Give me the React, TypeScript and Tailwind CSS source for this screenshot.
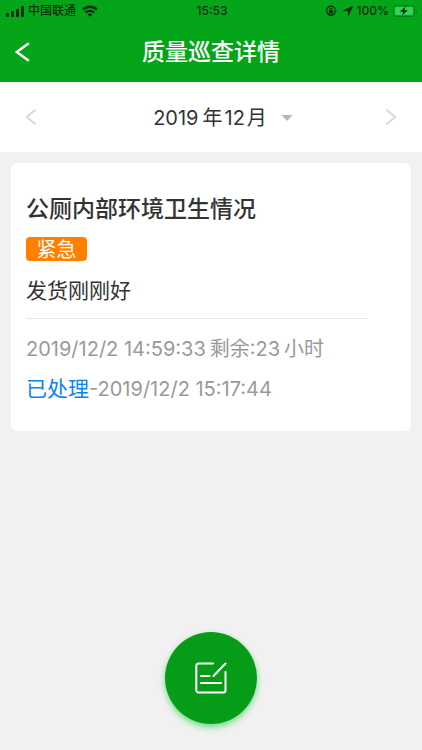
import React from 'react';

interface Inspection {
  title: string;
  level: string;
  description: string;
  createdAt: string;
  hoursLeft: number;
  status: string;
  handledAt: string;
}

const inspection: Inspection = {
  title: '公厕内部环境卫生情况',
  level: '紧急',
  description: '发货刚刚好',
  createdAt: '2019/12/2 14:59:33',
  hoursLeft: 23,
  status: '已处理',
  handledAt: '2019/12/2 15:17:44',
};

function StatusBar() {
  return (
    <div className="grid h-[22px] grid-cols-[1fr_auto_1fr] items-center pl-1.5 pr-1 text-xs font-medium text-[#06300b]">
      <div className="flex items-center gap-1">
        <svg width="18" height="11" viewBox="0 0 18 11" fill="currentColor" aria-hidden="true">
          <rect x="0" y="7" width="3" height="4" rx="0.8" />
          <rect x="5" y="5" width="3" height="6" rx="0.8" />
          <rect x="10" y="3" width="3" height="8" rx="0.8" />
          <rect x="15" y="0" width="3" height="11" rx="0.8" />
        </svg>
        <span>中国联通</span>
        <svg className="ml-0.5" width="16" height="12" viewBox="0 0 16 12" fill="none" stroke="currentColor" strokeWidth="2.4" aria-hidden="true">
          <path d="M1 4.6a10 10 0 0 1 14 0" />
          <path d="M3.7 7.6a6.2 6.2 0 0 1 8.6 0" />
          <path d="M8 11.8L5.6 9.4a3.5 3.5 0 0 1 4.8 0z" fill="currentColor" stroke="none" />
        </svg>
      </div>
      <span>15:53</span>
      <div className="flex items-center justify-end gap-1">
        <svg className="mr-0.5" width="12" height="12" viewBox="0 0 12 12" fill="none" stroke="currentColor" aria-hidden="true">
          <path d="M10.3 7.3A4.5 4.5 0 1 1 10.3 4.2" strokeWidth="1.3" />
          <path d="M8.9 5.2h3L10.4 7.4z" fill="currentColor" stroke="none" />
          <rect x="3.9" y="5.2" width="4.2" height="3.2" rx="0.4" fill="currentColor" stroke="none" />
          <path d="M4.8 5.4V4.5a1.2 1.2 0 0 1 2.4 0v0.9" strokeWidth="0.9" />
        </svg>
        <svg width="10" height="10" viewBox="0 0 10 10" fill="currentColor" stroke="currentColor" strokeWidth="0.8" strokeLinejoin="round" aria-hidden="true">
          <path d="M9.5 0.5L5.4 9.5V4.9L0.5 4.6z" />
        </svg>
        <span>100%</span>
        <svg width="25" height="12" viewBox="0 0 25 12" aria-hidden="true">
          <rect x="0.5" y="0.5" width="21" height="11" rx="2.6" fill="none" stroke="#067a14" />
          <rect x="2" y="2" width="18" height="8" rx="1.4" fill="#33d158" />
          <path d="M23 4v4c1.3-0.6 1.3-3.4 0-4z" fill="#067a14" />
          <path d="M12.6 1.4L6.8 6.8h3.4L9 10.6l5.9-5.4h-3.5z" fill="#06300b" />
        </svg>
      </div>
    </div>
  );
}

function Header() {
  return (
    <header className="bg-[#05a51a]">
      <StatusBar />
      <div className="grid h-[60px] grid-cols-[44px_1fr_44px] items-center text-white">
        <button type="button" aria-label="返回" className="flex h-11 items-center pl-[15px]">
          <svg width="15" height="20" viewBox="0 0 15 20" fill="none" stroke="currentColor" strokeWidth="2.4" aria-hidden="true">
            <path d="M13.8 1.2L1.8 10l12 8.8" />
          </svg>
        </button>
        <h1 className="text-center text-[23px] leading-8 font-medium">质量巡查详情</h1>
      </div>
    </header>
  );
}

function MonthPicker() {
  return (
    <nav className="flex h-[70px] items-center justify-between bg-white px-[25px]">
      <button type="button" aria-label="上个月" className="flex h-11 items-center text-[#d6d6d6]">
        <svg width="12" height="16" viewBox="0 0 12 16" fill="none" stroke="currentColor" strokeWidth="1.8" aria-hidden="true">
          <path d="M10.5 0.8L1.8 8l8.7 7.2" />
        </svg>
      </button>
      <button type="button" className="flex items-center pt-0.5 pl-6 text-xl text-[#333]">
        <span className="mr-1">2019</span>
        <span className="mr-0.5">年</span>
        <span className="mr-0.5">12</span>
        <span>月</span>
        <svg className="ml-3.5" width="12" height="6" viewBox="0 0 12 6" fill="#b8b8b8" aria-hidden="true">
          <path d="M0.5 0h11L6 6z" />
        </svg>
      </button>
      <button type="button" aria-label="下个月" className="flex h-11 items-center text-[#d6d6d6]">
        <svg width="12" height="16" viewBox="0 0 12 16" fill="none" stroke="currentColor" strokeWidth="1.8" aria-hidden="true">
          <path d="M1.5 0.8L10.2 8l-8.7 7.2" />
        </svg>
      </button>
    </nav>
  );
}

function InspectionCard({ item }: { item: Inspection }) {
  return (
    <article className="m-[11px] rounded-md bg-white px-[15px] pt-[30px] pb-[22px]">
      <h2 className="text-[23px] leading-8 font-medium text-[#333]">{item.title}</h2>
      <span className="mt-3 flex h-6 w-[61px] items-center justify-center rounded bg-[#ff8000] pt-0.5 text-xl text-white">
        {item.level}
      </span>
      <p className="mt-3.5 text-[21px] leading-8 text-[#333]">{item.description}</p>
      <div className="mt-[11px] mr-[29px] border-t border-[#e8e8e8] pt-2.5 text-[#999]">
        <p className="flex items-center text-xl leading-10 whitespace-nowrap">
          <span className="mr-1">{item.createdAt}</span>
          <span className="mr-1">剩余:{item.hoursLeft}</span>
          <span>小时</span>
        </p>
        <p className="text-xl leading-10 whitespace-nowrap">
          <span className="text-[21px] text-[#0a84f0]">{item.status}</span>-{item.handledAt}
        </p>
      </div>
    </article>
  );
}

export default function App() {
  return (
    <div className="flex min-h-screen flex-col bg-[#f1f1f1] font-['Inter','Noto_Sans_CJK_SC',sans-serif]">
      <Header />
      <MonthPicker />
      <main>
        <InspectionCard item={inspection} />
      </main>
      <footer className="mt-auto flex justify-center pb-[26px]">
        <button
          type="button"
          aria-label="填写处理"
          className="flex size-[92px] items-center justify-center rounded-full bg-[#069c18] text-white shadow-[0_3px_6px_rgba(5,200,50,0.55)]"
        >
          <svg
            width="32"
            height="32"
            viewBox="0 0 32 32"
            fill="none"
            stroke="currentColor"
            strokeWidth="2"
            strokeLinecap="round"
            strokeLinejoin="round"
            aria-hidden="true"
          >
            <path d="M18 1.5H3.5a2.2 2.2 0 0 0-2.2 2.2v24.6a2.2 2.2 0 0 0 2.2 2.2h24.8a2.2 2.2 0 0 0 2.2-2.2V10" />
            <path d="M30.5 1.5L18.5 14" />
            <path d="M6 14h8.5M6 21h20" />
          </svg>
        </button>
      </footer>
    </div>
  );
}
